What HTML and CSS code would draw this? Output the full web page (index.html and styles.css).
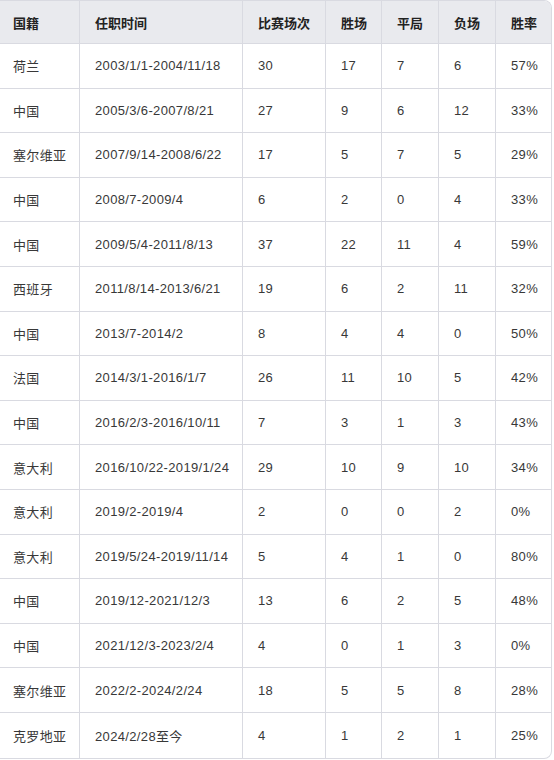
FILE: index.html
```html
<!DOCTYPE html>
<html lang="zh">
<head>
<meta charset="utf-8">
<link rel="stylesheet" href="styles.css">
</head>
<body>
<div class="wrap">
<table class="tbl">
<thead>
<tr><th class="c1">国籍</th><th class="c2">任职时间</th><th class="c3">比赛场次</th><th class="c4">胜场</th><th class="c5">平局</th><th class="c6">负场</th><th class="c7">胜率</th></tr>
</thead>
<tbody>
<tr><td>荷兰</td><td>2003/1/1-2004/11/18</td><td>30</td><td>17</td><td>7</td><td>6</td><td>57%</td></tr>
<tr><td>中国</td><td>2005/3/6-2007/8/21</td><td>27</td><td>9</td><td>6</td><td>12</td><td>33%</td></tr>
<tr><td>塞尔维亚</td><td>2007/9/14-2008/6/22</td><td>17</td><td>5</td><td>7</td><td>5</td><td>29%</td></tr>
<tr><td>中国</td><td>2008/7-2009/4</td><td>6</td><td>2</td><td>0</td><td>4</td><td>33%</td></tr>
<tr><td>中国</td><td>2009/5/4-2011/8/13</td><td>37</td><td>22</td><td>11</td><td>4</td><td>59%</td></tr>
<tr><td>西班牙</td><td>2011/8/14-2013/6/21</td><td>19</td><td>6</td><td>2</td><td>11</td><td>32%</td></tr>
<tr><td>中国</td><td>2013/7-2014/2</td><td>8</td><td>4</td><td>4</td><td>0</td><td>50%</td></tr>
<tr><td>法国</td><td>2014/3/1-2016/1/7</td><td>26</td><td>11</td><td>10</td><td>5</td><td>42%</td></tr>
<tr><td>中国</td><td>2016/2/3-2016/10/11</td><td>7</td><td>3</td><td>1</td><td>3</td><td>43%</td></tr>
<tr><td>意大利</td><td>2016/10/22-2019/1/24</td><td>29</td><td>10</td><td>9</td><td>10</td><td>34%</td></tr>
<tr><td>意大利</td><td>2019/2-2019/4</td><td>2</td><td>0</td><td>0</td><td>2</td><td>0%</td></tr>
<tr><td>意大利</td><td>2019/5/24-2019/11/14</td><td>5</td><td>4</td><td>1</td><td>0</td><td>80%</td></tr>
<tr><td>中国</td><td>2019/12-2021/12/3</td><td>13</td><td>6</td><td>2</td><td>5</td><td>48%</td></tr>
<tr><td>中国</td><td>2021/12/3-2023/2/4</td><td>4</td><td>0</td><td>1</td><td>3</td><td>0%</td></tr>
<tr><td>塞尔维亚</td><td>2022/2-2024/2/24</td><td>18</td><td>5</td><td>5</td><td>8</td><td>28%</td></tr>
<tr><td>克罗地亚</td><td>2024/2/28至今</td><td>4</td><td>1</td><td>2</td><td>1</td><td>25%</td></tr>
</tbody>
</table>
</div>
</body>
</html>
```

FILE: styles.css
```css
html, body {
  margin: 0;
  padding: 0;
  background: #ffffff;
}

.wrap {
  width: 551px;
  border: 1px solid #d9dae1;
  border-left: none;
  border-radius: 0 8px 8px 0;
  overflow: hidden;
}

.tbl {
  width: 551px;
  table-layout: fixed;
  border-collapse: separate;
  border-spacing: 0;
  font-family: "Liberation Sans", Arial, "Noto Sans CJK SC", sans-serif;
  font-size: 13px;
  color: #383838;
}

.tbl th,
.tbl td {
  box-sizing: border-box;
  padding: 0 0 0 15px;
  text-align: left;
  vertical-align: middle;
  border-right: 1px solid #d9dae1;
  border-bottom: 1px solid #d9dae1;
  white-space: nowrap;
}

.tbl td {
  letter-spacing: 0.35px;
}

.tbl th:first-child,
.tbl td:first-child {
  padding-left: 13px;
}

.tbl th:last-child,
.tbl td:last-child {
  border-right: none;
}

.tbl tbody tr:last-child td {
  border-bottom: none;
}

.tbl thead tr {
  height: 43px;
}

.tbl th {
  background: #e9eaee;
  color: #222222;
  font-weight: bold;
}

.tbl tbody tr {
  height: 44.6px;
}

.c1 { width: 80px; }
.c2 { width: 163px; }
.c3 { width: 83px; }
.c4 { width: 56px; }
.c5 { width: 57px; }
.c6 { width: 57px; }
.c7 { width: 55px; }
```
